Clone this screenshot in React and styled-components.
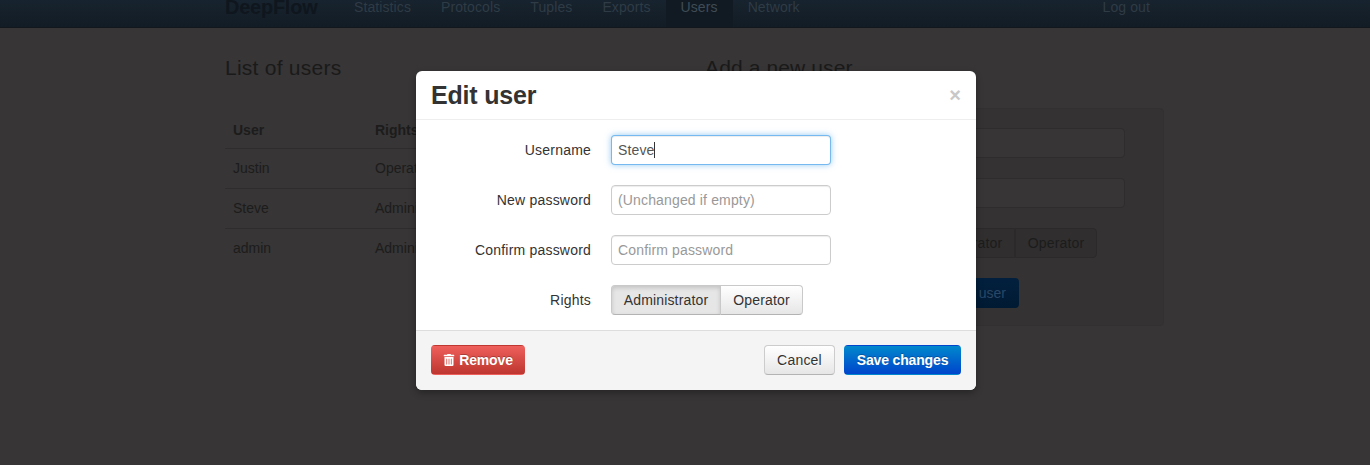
import styled, { createGlobalStyle } from "styled-components";
import { FaTrashAlt } from "react-icons/fa";

const GlobalStyle = createGlobalStyle`
	html, body {
		margin: 0;
		padding: 0;
		height: 100%;
		background: #373535;
		font-family: "Liberation Sans", Arial, sans-serif;
		font-size: 14px;
		line-height: 20px;
		overflow: hidden;
	}
`;

const Page = styled.div`
	position: relative;
	width: 1370px;
	height: 465px;
	overflow: hidden;
	background: #373535;
	color: #1c1c1c;
`;

const Navbar = styled.div`
	height: 28px;
	box-sizing: border-box;
	padding: 0 220px 0 225px;
	display: flex;
	align-items: flex-end;
	background: linear-gradient(#17232e, #121c25);
	border-bottom: 1px solid #11171c;
`;

const Brand = styled.div`
	font-size: 20px;
	font-weight: bold;
	letter-spacing: -0.25px;
	color: #0f161d;
	width: 114px;
	padding-bottom: 12px;
	line-height: 15px;
`;

const NavLink = styled.div`
	padding: 0 15px 13px;
	line-height: 14px;
	letter-spacing: 0.1px;
	color: ${(p) => (p.$active ? "#3f4c57" : "#2f3b45")};
	background: ${(p) => (p.$active ? "#111a22" : "transparent")};
`;

const NavRight = styled.div`
	margin-left: auto;
	padding-bottom: 13px;
	line-height: 14px;
	letter-spacing: 0.1px;
	color: #2f3b45;
`;

const Columns = styled.div`
	display: grid;
	grid-template-columns: 440px 499px;
	padding: 26px 0 0 225px;
`;

const Heading = styled.h3`
	margin: 0;
	font-size: 21px;
	font-weight: normal;
	letter-spacing: 0.25px;
	line-height: 28px;
	color: #1a1a1a;
`;

const UserTable = styled.table`
	width: 440px;
	margin-top: 30px;
	border-collapse: collapse;

	th, td {
		text-align: left;
		padding: 0 8px;
		font-size: 14px;
		color: #1c1c1c;
		border-bottom: 1px solid #2e2c2c;
	}

	th {
		height: 36px;
	}

	td {
		height: 37px;
		padding-bottom: 2px;
	}

	tr:last-child td {
		border-bottom: none;
	}

	th:first-child, td:first-child {
		width: 126px;
	}
`;

const AddHeading = styled(Heading)`
	padding-left: 40px;
	letter-spacing: 0.12px;
`;

const Well = styled.div`
	margin-top: 26px;
	height: 218px;
	box-sizing: border-box;
	padding: 19px 38px 0 239px;
	background: #343232;
	border: 1px solid #323030;
	border-radius: 4px;
	display: flex;
	flex-direction: column;
	align-items: flex-start;
`;

const GhostInput = styled.div`
	width: 100%;
	height: 30px;
	box-sizing: border-box;
	margin-bottom: 20px;
	background: #373535;
	border: 1px solid #2e2c2c;
	border-radius: 4px;
`;

const GhostGroup = styled.div`
	display: flex;
	height: 30px;
	margin-bottom: 20px;
`;

const GhostToggle = styled.div`
	width: ${(p) => p.$width}px;
	box-sizing: border-box;
	text-align: center;
	line-height: 28px;
	letter-spacing: 0.15px;
	color: #1c1c1c;
	background: #302e2e;
	border: 1px solid #2b2929;
	border-radius: ${(p) => (p.$first ? "4px 0 0 4px" : "0 4px 4px 0")};
`;

const GhostSubmit = styled.div`
	width: 114px;
	height: 30px;
	box-sizing: border-box;
	padding-right: 13px;
	text-align: right;
	line-height: 30px;
	color: #2a4766;
	background: linear-gradient(#02203e, #011a33);
	border-radius: 4px;
`;

const Modal = styled.div`
	position: absolute;
	left: 416px;
	top: 71px;
	width: 560px;
	height: 319px;
	display: flex;
	flex-direction: column;
	background: #fff;
	border-radius: 6px;
	overflow: hidden;
	box-shadow: 0 3px 7px rgba(0, 0, 0, 0.3);
`;

const ModalHeader = styled.div`
	height: 49px;
	box-sizing: border-box;
	padding: 0 15px;
	display: flex;
	align-items: center;
	justify-content: space-between;
	border-bottom: 1px solid #eee;
`;

const ModalTitle = styled.h3`
	margin: 0;
	font-size: 25px;
	font-weight: bold;
	letter-spacing: -0.2px;
	color: #333;
`;

const Close = styled.span`
	font-size: 20px;
	font-weight: bold;
	color: #c8c8c8;
`;

const ModalBody = styled.div`
	flex: 1;
	box-sizing: border-box;
	padding: 15px;
	display: grid;
	grid-template-columns: 160px 1fr;
	grid-auto-rows: 30px;
	column-gap: 20px;
	row-gap: 20px;
	align-items: center;
`;

const Label = styled.label`
	text-align: right;
	letter-spacing: 0.2px;
	color: #333;
`;

const Field = styled.div`
	position: relative;
	width: 220px;
	height: 30px;
`;

const Input = styled.input`
	width: 100%;
	height: 100%;
	box-sizing: border-box;
	padding: 0 6px;
	font: inherit;
	letter-spacing: 0.15px;
	color: #555;
	background: #fff;
	outline: none;
	border-radius: 4px;
	border: 1px solid ${(p) => (p.$focus ? "rgba(82, 168, 236, 0.8)" : "#ccc")};
	box-shadow: ${(p) =>
		p.$focus
			? "inset 0 1px 1px rgba(0,0,0,.075), 0 0 6px rgba(82,168,236,.6)"
			: "inset 0 1px 1px rgba(0,0,0,.075)"};

	&::placeholder {
		color: #999;
		opacity: 1;
	}
`;

const Caret = styled.span`
	position: absolute;
	left: 43px;
	top: 7px;
	width: 1px;
	height: 16px;
	background: #333;
`;

const Toggles = styled.div`
	display: flex;
	height: 30px;
`;

const Toggle = styled.div`
	box-sizing: border-box;
	width: ${(p) => p.$width}px;
	text-align: center;
	line-height: 28px;
	letter-spacing: 0.15px;
	color: #333;
	border: 1px solid #c9c9c9;
	border-bottom-color: #b3b3b3;
	background: ${(p) => (p.$on ? "#e6e6e6" : "linear-gradient(#fff, #e6e6e6)")};
	box-shadow: ${(p) => (p.$on ? "inset 0 2px 4px rgba(0,0,0,.15)" : "inset 0 1px 0 rgba(255,255,255,.2)")};
	border-radius: ${(p) => (p.$on ? "4px 0 0 4px" : "0 4px 4px 0")};
	margin-left: ${(p) => (p.$on ? 0 : -1)}px;
`;

const ModalFooter = styled.div`
	height: 60px;
	box-sizing: border-box;
	padding: 14px 15px 0;
	display: flex;
	align-items: flex-start;
	gap: 9px;
	background: #f5f4f4;
	border-top: 1px solid #ddd;
`;

const Button = styled.button`
	height: 30px;
	box-sizing: border-box;
	width: ${(p) => p.$width}px;
	padding: 0;
	display: flex;
	align-items: center;
	justify-content: center;
	gap: 4px;
	font: inherit;
	border-radius: 4px;
	border: 1px solid ${(p) => (p.$kind === "plain" ? "#ccc" : "transparent")};
	border-bottom-color: ${(p) => (p.$kind === "plain" ? "#b3b3b3" : "transparent")};
	margin-left: ${(p) => (p.$push ? "auto" : 0)};
	font-weight: ${(p) => (p.$kind === "plain" ? "normal" : "bold")};
	letter-spacing: ${(p) => (p.$kind === "plain" ? "0.2px" : "-0.15px")};
	color: ${(p) => (p.$kind === "plain" ? "#333" : "#fff")};
	text-shadow: ${(p) => (p.$kind === "plain" ? "0 1px 1px rgba(255,255,255,.75)" : "0 -1px 0 rgba(0,0,0,.25)")};
	background: ${(p) =>
		p.$kind === "danger"
			? "linear-gradient(#ee5f5b, #bd362f)"
			: p.$kind === "primary"
				? "linear-gradient(#0088cc, #0044cc)"
				: "linear-gradient(#fff, #e6e6e6)"};
`;

const users = [
	["Justin", "Operator"],
	["Steve", "Administrator"],
	["admin", "Administrator"],
];

const navItems = ["Statistics", "Protocols", "Tuples", "Exports", "Users", "Network"];

export default function App() {
	return (
		<Page>
			<GlobalStyle />
			<Navbar>
				<Brand>DeepFlow</Brand>
				{navItems.map((item) => (
					<NavLink key={item} $active={item === "Users"}>
						{item}
					</NavLink>
				))}
				<NavRight>Log out</NavRight>
			</Navbar>

			<Columns>
				<div>
					<Heading>List of users</Heading>
					<UserTable>
						<thead>
							<tr>
								<th>User</th>
								<th>Rights</th>
							</tr>
						</thead>
						<tbody>
							{users.map(([name, rights]) => (
								<tr key={name}>
									<td>{name}</td>
									<td>{rights}</td>
								</tr>
							))}
						</tbody>
					</UserTable>
				</div>
				<div>
					<AddHeading>Add a new user</AddHeading>
					<Well>
						<GhostInput />
						<GhostInput />
						<GhostGroup>
							<GhostToggle $first $width={110}>Administrator</GhostToggle>
							<GhostToggle $width={82}>Operator</GhostToggle>
						</GhostGroup>
						<GhostSubmit>Add user</GhostSubmit>
					</Well>
				</div>
			</Columns>

			<Modal>
				<ModalHeader>
					<ModalTitle>Edit user</ModalTitle>
					<Close>×</Close>
				</ModalHeader>
				<ModalBody>
					<Label>Username</Label>
					<Field>
						<Input $focus defaultValue="Steve" />
						<Caret />
					</Field>
					<Label>New password</Label>
					<Field>
						<Input placeholder="(Unchanged if empty)" />
					</Field>
					<Label>Confirm password</Label>
					<Field>
						<Input placeholder="Confirm password" />
					</Field>
					<Label>Rights</Label>
					<Toggles>
						<Toggle $on $width={110}>Administrator</Toggle>
						<Toggle $width={83}>Operator</Toggle>
					</Toggles>
				</ModalBody>
				<ModalFooter>
					<Button $kind="danger" $width={94}>
						<FaTrashAlt size={12} />
						Remove
					</Button>
					<Button $kind="plain" $push $width={71}>Cancel</Button>
					<Button $kind="primary" $width={117}>Save changes</Button>
				</ModalFooter>
			</Modal>
		</Page>
	);
}
